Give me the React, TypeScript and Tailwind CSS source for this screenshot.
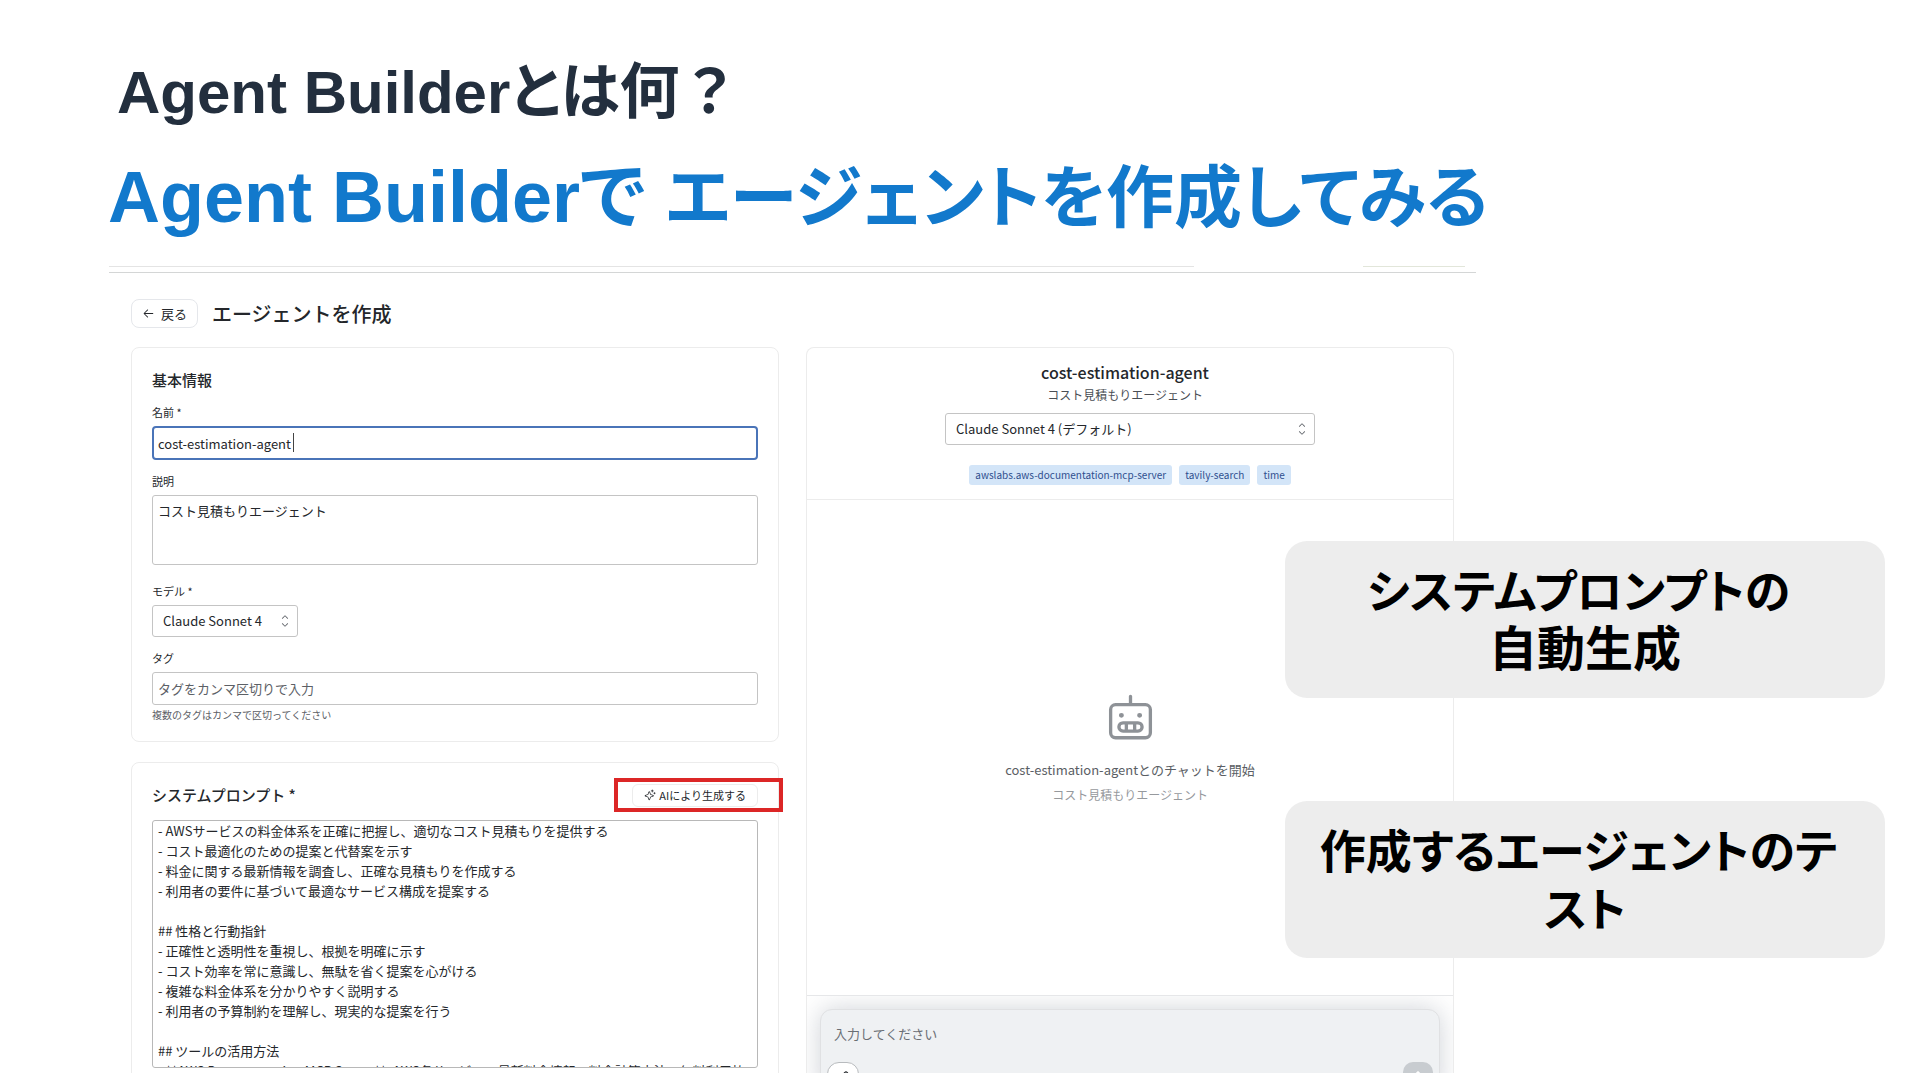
import { useState } from 'react';
import type { ReactNode } from 'react';
import { PiArrowLeft, PiArrowUp, PiCaretUpDown, PiPaperclip, PiRobot, PiSparkle } from 'react-icons/pi';

const TOOLS = ['awslabs.aws-documentation-mcp-server', 'tavily-search', 'time'];

const PROMPT = `- AWSサービスの料金体系を正確に把握し、適切なコスト見積もりを提供する
- コスト最適化のための提案と代替案を示す
- 料金に関する最新情報を調査し、正確な見積もりを作成する
- 利用者の要件に基づいて最適なサービス構成を提案する

## 性格と行動指針
- 正確性と透明性を重視し、根拠を明確に示す
- コスト効率を常に意識し、無駄を省く提案を心がける
- 複雑な料金体系を分かりやすく説明する
- 利用者の予算制約を理解し、現実的な提案を行う

## ツールの活用方法
- **AWS Documentation MCP Server**: AWS各サービスの最新料金情報、料金計算方法、無料利用枠を調べる`;

export default function App() {
  return (
    <main className="relative flex h-screen flex-col overflow-hidden bg-white pb-[7px]">
      <header className="pt-[57px] font-['Liberation_Sans','Noto_Sans_CJK_JP',sans-serif] font-bold [font-feature-settings:'palt']">
        <h1 className="pl-[117px] text-[60px] leading-[72px] text-[#232f3e]">
          Agent Builderとは何<span className="[font-feature-settings:normal]">？</span>
        </h1>
        <h2 className="mt-[24px] pl-[108px] text-[72px] leading-[88px] text-[#1279cc]">
          Agent Builderで <span className="text-[68px]">エージェントを作成してみる</span>
        </h2>
      </header>

      <section className="ml-[109px] mt-[24px] flex min-h-0 w-[71.2%] flex-1 flex-col overflow-hidden font-['Noto_Sans_CJK_JP',sans-serif] text-[13px] text-[#24272b]">
        <div className="flex justify-between pr-[11px]">
          <div className="h-px w-[80%] bg-[#e4e4e4]" />
          <div className="h-px w-[102px] bg-[#e2e6da]" />
        </div>
        <div className="mt-[5px] h-px shrink-0 bg-[#d4d6d6]" />

        <div className="flex shrink-0 items-center gap-[14px] px-[22px] pb-[19px] pt-[26px]">
          <button className="flex h-[29px] items-center gap-[6px] rounded-lg border border-gray-200 px-[10px] leading-5">
            <PiArrowLeft size={13} />
            戻る
          </button>
          <h3 className="text-[20px] font-medium leading-7">エージェントを作成</h3>
        </div>

        <div className="grid min-h-0 flex-1 grid-cols-2 gap-[27px] px-[22px]">
          <div className="flex min-h-0 flex-col gap-[20px]">
            <BasicInfo />
            <SystemPrompt />
          </div>
          <ChatPreview />
        </div>
      </section>

      {/* Callouts */}
      <aside className="absolute right-[35px] top-[541px] flex w-[31.25%] flex-col gap-[103px] whitespace-nowrap text-center font-['Liberation_Sans','Noto_Sans_CJK_JP',sans-serif] text-[46px] font-bold leading-[58px] text-black [font-feature-settings:'palt']">
        <p className="rounded-[22px] bg-[#ededed] pb-[19px] pt-[22px]">
          システムプロンプトの&nbsp;
          <br />
          <span className="text-[48px]">自動生成</span>
        </p>
        <p className="rounded-[22px] bg-[#ededed] pb-[19px] pt-[22px]">
          作成するエージェントのテ&nbsp;
          <br />
          スト
        </p>
      </aside>
    </main>
  );
}

function Field({ id, label, children }: { id: string; label: string; children: ReactNode }) {
  return (
    <div>
      <label htmlFor={id} className="mb-[6px] block text-[11px] leading-4">
        {label}
      </label>
      {children}
    </div>
  );
}

function Select({ id, label, option, className }: { id: string; label?: string; option: string; className: string }) {
  return (
    <div className={`relative ${className}`}>
      <select
        id={id}
        aria-label={label}
        className="block h-[32px] w-full appearance-none rounded-[3px] border border-[#c4c4c4] bg-white pl-[10px] pr-[26px] leading-5"
      >
        <option>{option}</option>
      </select>
      <PiCaretUpDown size={14} className="pointer-events-none absolute right-[6px] top-[9px] text-[#60646a]" />
    </div>
  );
}

function BasicInfo() {
  const [name, setName] = useState('cost-estimation-agent');

  return (
    <div className="shrink-0 rounded-lg border border-[#ececec] px-[20px] pb-[18px] pt-[22px]">
      <h4 className="text-[15px] font-medium leading-5">基本情報</h4>
      <div className="mt-[14px] flex flex-col gap-[13px]">
        <Field id="name" label="名前 *">
          <div className="relative">
            <input
              id="name"
              value={name}
              onChange={e => setName(e.target.value)}
              className="block h-[34px] w-full rounded-[4px] border-2 border-[#4a74b8] px-[4px] outline-none"
            />
            <span className="absolute left-[141px] top-[7px] h-[19px] w-px bg-[#444]" />
          </div>
        </Field>
        <Field id="description" label="説明">
          <textarea
            id="description"
            defaultValue="コスト見積もりエージェント"
            className="block h-[70px] w-full resize-none rounded-[3px] border border-[#c4c4c4] px-[5px] py-[5px] leading-5"
          />
        </Field>
        <div className="pt-[5px]">
          <Field id="model" label="モデル *">
            <Select id="model" option="Claude Sonnet 4" className="w-[146px]" />
          </Field>
        </div>
        <Field id="tags" label="タグ">
          <input
            id="tags"
            placeholder="タグをカンマ区切りで入力"
            className="block h-[33px] w-full rounded-[3px] border border-[#c4c4c4] px-[5px] placeholder:text-[#5c6066]"
          />
          <p className="mt-[2px] text-[10px] leading-4 text-[#5c6066]">複数のタグはカンマで区切ってください</p>
        </Field>
      </div>
    </div>
  );
}

function SystemPrompt() {
  return (
    <div className="relative shrink-0 rounded-lg border border-[#ececec] px-[20px] pb-[40px] pt-[20px]">
      <div className="mb-[13px] flex items-center justify-between">
        <label htmlFor="prompt" className="text-[15px] font-medium leading-6">
          システムプロンプト *
        </label>
        <button className="flex h-[23px] items-center gap-[3px] rounded-md border border-[#ececec] px-[11px] text-[11px] leading-4">
          <PiSparkle size={12} />
          AIにより生成する
        </button>
      </div>
      <textarea
        id="prompt"
        defaultValue={PROMPT}
        className="block h-[248px] w-full resize-none overflow-hidden rounded-[3px] border border-[#b8b8b8] px-[5px] leading-5"
      />
      <div className="pointer-events-none absolute -right-[5px] top-[15px] h-[34px] w-[169px] border-4 border-[#dc2626]" />
    </div>
  );
}

function ChatPreview() {
  return (
    <div className="flex min-h-0 flex-col rounded-t-lg border border-b-0 border-[#ececec]">
      <div className="flex flex-col items-center border-b border-[#ececec] pb-[14px] pt-[12px]">
        <div className="mb-[10px] pr-[10px] text-center">
          <h4 className="text-[16px] font-medium leading-6">cost-estimation-agent</h4>
          <p className="mt-[3px] text-[12px] leading-4 text-[#4a4e54]">コスト見積もりエージェント</p>
        </div>
        <Select id="chat-model" label="モデル" option="Claude Sonnet 4 (デフォルト)" className="w-[370px]" />
        <ul className="mt-[20px] flex gap-[7px] text-[10px] leading-5 text-[#2f4f8f]">
          {TOOLS.map(tool => (
            <li key={tool} className="rounded-[3px] bg-[#d3e5f8] px-[6px]">
              {tool}
            </li>
          ))}
        </ul>
      </div>

      <div className="flex flex-1 flex-col items-center justify-center">
        <PiRobot size={53} className="text-[#8e9297]" />
        <p className="mt-[14px] leading-5 text-[#5a5e64]">cost-estimation-agentとのチャットを開始</p>
        <p className="mt-[7px] text-[12px] leading-4 text-[#96999d]">コスト見積もりエージェント</p>
      </div>

      <div className="h-[78px] shrink-0 overflow-hidden border-t border-[#e6e7e9] px-[13px] pt-[13px]">
        <div className="rounded-xl border border-[#e0e1e3] bg-[#eff1f3] px-[6px] pt-[10px] shadow-[0_0_26px_rgba(100,110,125,0.3)]">
          <input
            aria-label="メッセージ"
            placeholder="入力してください"
            className="block h-[26px] w-full px-[7px] placeholder:text-[#6a6e73]"
          />
          <div className="flex justify-between pt-[16px]">
            <button
              aria-label="添付"
              className="flex size-[32px] items-center justify-center rounded-[12px] border border-[#b8bbbe] bg-white"
            >
              <PiPaperclip size={16} />
            </button>
            <button
              aria-label="送信"
              className="flex size-[30px] items-center justify-center rounded-[10px] bg-[#c8ccd0] text-white"
            >
              <PiArrowUp size={16} />
            </button>
          </div>
        </div>
      </div>
    </div>
  );
}
